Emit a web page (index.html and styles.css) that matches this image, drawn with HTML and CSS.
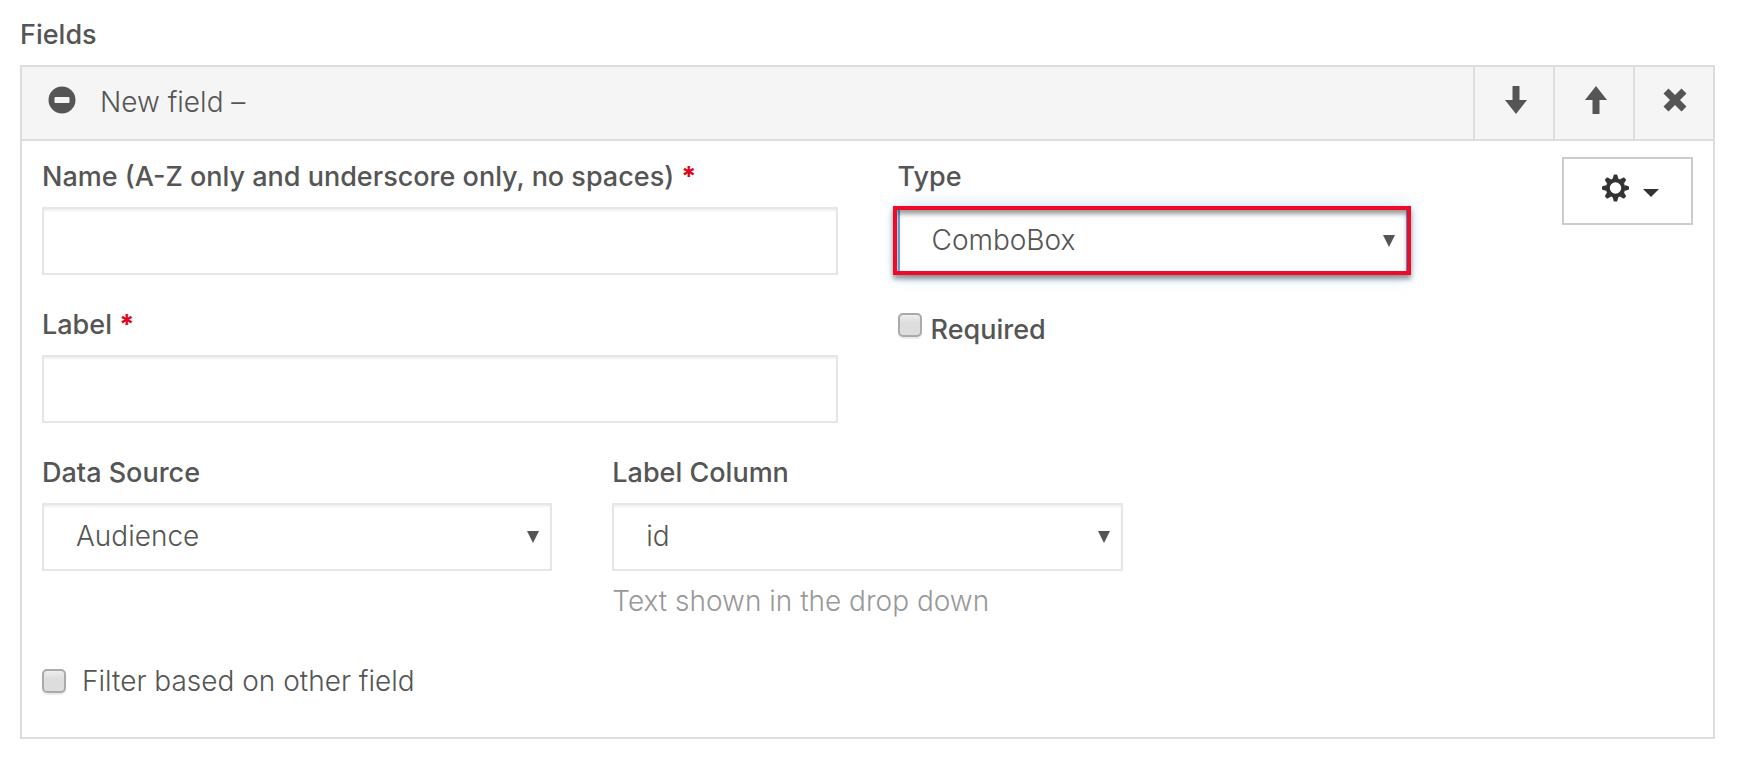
FILE: index.html
```
<!DOCTYPE html>
<html lang="en">
<head>
    <meta charset="UTF-8">
    <meta name="viewport" content="width=device-width, initial-scale=1.0">
    <title>Fields</title>
    <link rel="stylesheet" href="styles.css">
</head>
<body>
<h2 class="title">Fields</h2>
<div class="panel">
    <div class="panel-header">
        <button type="button" class="toggle">
            <svg class="icon" viewBox="0 0 28 28" aria-hidden="true">
                <path fill-rule="evenodd" d="M14 .5a13.500 13.500 0 1 0 0 27a13.500 13.500 0 1 0 0-27zM7.500 11h13a1 1 0 0 1 1 1v4a1 1 0 0 1-1 1h-13a1 1 0 0 1-1-1v-4a1 1 0 0 1 1-1z"/>
            </svg>
            <span>New field –</span>
        </button>
        <button type="button" class="tool" aria-label="Move down">
            <svg class="icon" viewBox="0 0 28 28" aria-hidden="true"><path d="M12 0h6q.5 0 .5.500V14H26L15 28L4 14h7.500V.5q0-.5.500-.5z"/></svg>
        </button>
        <button type="button" class="tool" aria-label="Move up">
            <svg class="icon" viewBox="0 0 28 28" aria-hidden="true"><path d="M12 28h6q.5 0 .5-.500V14H26L15 0L4 14h7.500v13.500q0 .5.500.5z"/></svg>
        </button>
        <button type="button" class="tool" aria-label="Remove">
            <svg class="icon" viewBox="0 0 28 28" aria-hidden="true"><path d="M7.500 2.500L14 9l6.500-6.500L25.500 7.500L19 14l6.500 6.500l-5 5L14 19l-6.500 6.500l-5-5L9 14L2.500 7.500z"/></svg>
        </button>
    </div>

    <form class="panel-body">
        <div class="field half">
            <label for="name">Name (A-Z only and underscore only, no spaces) <span class="star">*</span></label>
            <input type="text" class="control" id="name">
        </div>
        <div class="field third">
            <label for="type">Type</label>
            <div class="select highlight">
                <select class="control" id="type">
                    <option>ComboBox</option>
                </select>
                <svg class="arrow" viewBox="0 0 12 12" aria-hidden="true"><path d="M0 0h12L6 12z"/></svg>
            </div>
        </div>
        <div class="options">
            <button type="button" class="options-btn" aria-label="Options">
                <svg class="icon" viewBox="0 0 28 28" aria-hidden="true">
                    <circle cx="14.500" cy="14" r="7.700" fill="none" stroke="currentColor" stroke-width="4"/>
                    <g transform="translate(14.500 14)">
                        <path id="tooth" d="M-2.900-9L-1.800-12.900q.2-.6.700-.6h2.200q.5 0 .7.600L2.900-9z"/>
                        <use href="#tooth" transform="rotate(45)"/>
                        <use href="#tooth" transform="rotate(90)"/>
                        <use href="#tooth" transform="rotate(135)"/>
                        <use href="#tooth" transform="rotate(180)"/>
                        <use href="#tooth" transform="rotate(225)"/>
                        <use href="#tooth" transform="rotate(270)"/>
                        <use href="#tooth" transform="rotate(315)"/>
                    </g>
                </svg>
                <svg class="caret" viewBox="0 0 16 8" aria-hidden="true"><path d="M0 0h16L8 8z"/></svg>
            </button>
        </div>

        <div class="field half">
            <label for="label">Label <span class="star">*</span></label>
            <input type="text" class="control" id="label">
        </div>
        <div class="check half">
            <input type="checkbox" id="required">
            <label for="required">Required</label>
        </div>

        <div class="field third">
            <label for="source">Data Source</label>
            <div class="select">
                <select class="control" id="source">
                    <option>Audience</option>
                </select>
                <svg class="arrow" viewBox="0 0 12 12" aria-hidden="true"><path d="M0 0h12L6 12z"/></svg>
            </div>
        </div>
        <div class="field third">
            <label for="column">Label Column</label>
            <div class="select">
                <select class="control" id="column">
                    <option>id</option>
                </select>
                <svg class="arrow" viewBox="0 0 12 12" aria-hidden="true"><path d="M0 0h12L6 12z"/></svg>
            </div>
            <p class="help">Text shown in the drop down</p>
        </div>

        <div class="check filter">
            <input type="checkbox" id="filter">
            <label for="filter">Filter based on other field</label>
        </div>
    </form>
</div>
</body>
</html>
```

FILE: styles.css
```
* {
    box-sizing: border-box;
}

body {
    margin: 0;
    padding: 15px 27px 19px 20px;
    font-family: Inter, Roboto, sans-serif;
    font-size: 28px;
    font-weight: 300;
    line-height: 40px;
    color: #555;
    background-color: #fff;
}

button,
input,
select {
    font: inherit;
    color: inherit;
}

button {
    background: none;
    cursor: pointer;
}

.title {
    margin: 0 0 10px;
    font-size: 27px;
    font-weight: 500;
}

.icon {
    display: block;
    width: 28px;
    height: 28px;
    fill: currentColor;
}

.panel {
    border: 2px solid #ddd;
}

.panel-header {
    display: flex;
    background-color: #f5f5f5;
    border-bottom: 2px solid #ddd;
}

.toggle {
    flex: 1;
    display: flex;
    align-items: center;
    gap: 24px;
    padding: 15px 26px 17px;
    border: none;
    text-align: left;
}

.toggle .icon {
    margin-bottom: 4px;
}

.tool {
    display: flex;
    justify-content: center;
    align-items: center;
    width: 80px;
    padding: 0 0 6px 2px;
    border: none;
    border-left: 2px solid #ddd;
}

.panel-body {
    display: grid;
    grid-template-columns: repeat(12, 1fr);
    gap: 30px 60px;
    padding: 16px 20px 36px;
}

.half {
    grid-column: span 6;
}

.third {
    grid-column: span 4;
}

.field label {
    display: block;
    margin-bottom: 10px;
    font-size: 27px;
    font-weight: 500;
}

.star {
    color: #e2001a;
    font-weight: 700;
}

.control {
    display: block;
    width: 100%;
    height: 68px;
    padding: 0 32px 2px;
    border: 2px solid #e6e6e6;
    border-radius: 0;
    background-color: #fff;
    box-shadow: inset 0 2px 2px rgba(0, 0, 0, 0.06);
    appearance: none;
}

.select {
    position: relative;
}

.arrow {
    position: absolute;
    top: 28px;
    right: 13px;
    width: 12px;
    height: 12px;
    fill: #555;
    pointer-events: none;
}

.highlight .control {
    border-color: #66afe9;
    box-shadow: 0 0 16px rgba(102, 175, 233, 0.4);
}

.highlight::after {
    content: "";
    position: absolute;
    inset: -1px -3px 0 -5px;
    border: 4px solid #f00a2a;
    box-shadow: 0 4px 5px rgba(0, 0, 0, 0.4), inset 0 4px 5px rgba(0, 0, 0, 0.4);
    pointer-events: none;
}

.options {
    grid-column: span 2;
    display: flex;
    justify-content: flex-end;
    align-items: flex-start;
}

.options-btn {
    display: flex;
    align-items: center;
    gap: 14px;
    height: 68px;
    padding: 0 32px 0 37px;
    border: 2px solid #ccc;
    color: #333;
}

.options-btn .icon {
    margin-bottom: 6px;
}

.caret {
    width: 16px;
    height: 8px;
    margin-top: 4px;
    fill: #333;
}

.check {
    display: flex;
    align-items: flex-start;
    gap: 9px;
    padding-top: 5px;
}

.check.half label {
    font-size: 27px;
    font-weight: 500;
}

.check input {
    width: 24px;
    height: 24px;
    margin: 3px 0 0;
    border: 2px solid #aaa;
    border-radius: 5px;
    background: linear-gradient(#eee, #ddd 40%);
    box-shadow: 0 2px 1px rgba(0, 0, 0, 0.08);
    appearance: none;
}

.check input:checked {
    background: #888;
}

.filter {
    grid-column: 1 / -1;
    gap: 16px;
    padding-top: 10px;
}

.filter input {
    margin-top: 8px;
}

.help {
    margin: 10px 0 0;
    color: #999;
}
```
